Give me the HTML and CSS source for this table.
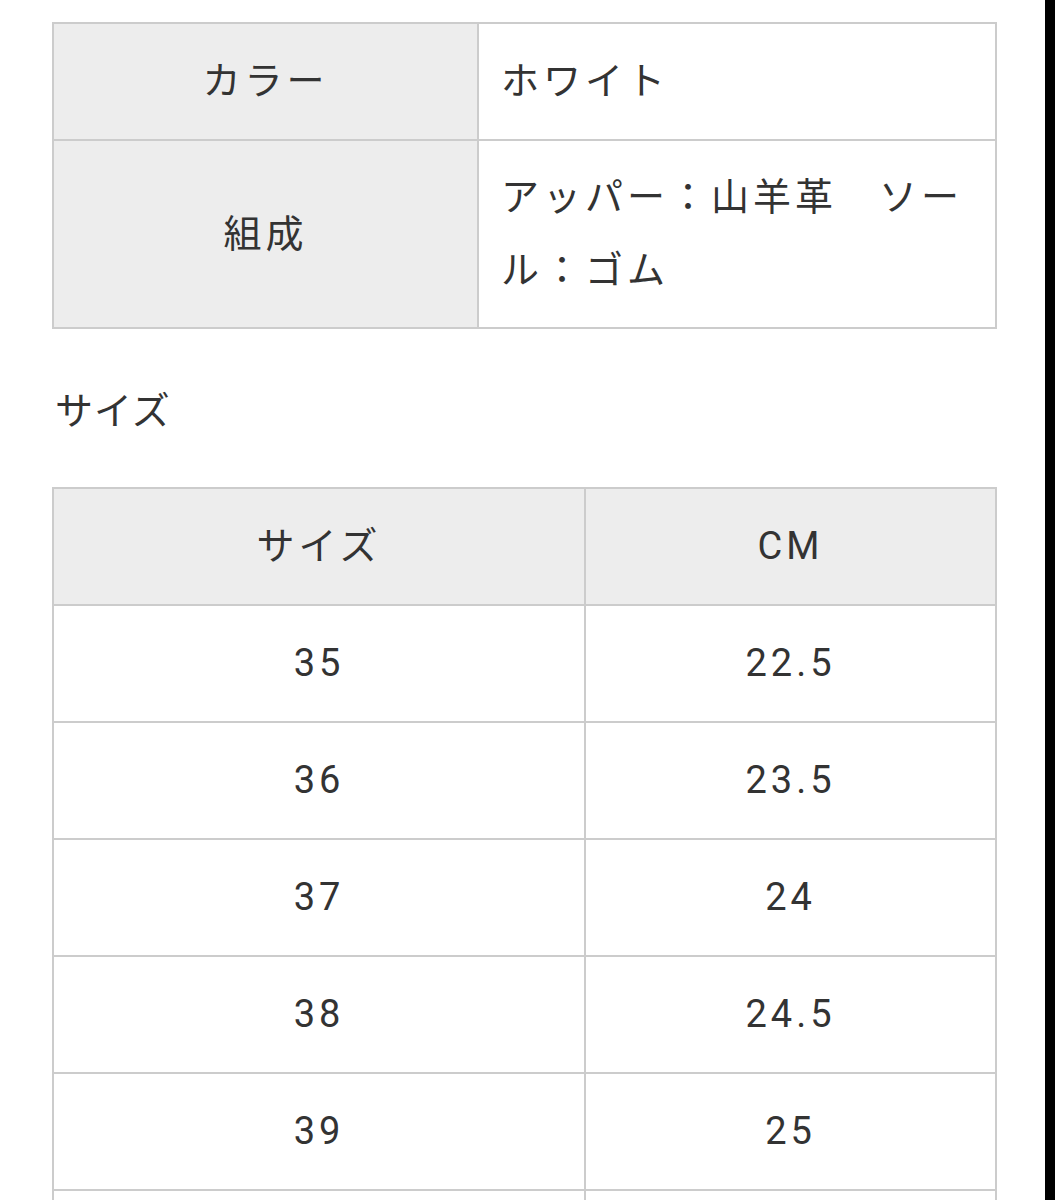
FILE: index.html
```html
<!DOCTYPE html>
<html lang="ja">
<head>
<meta charset="utf-8">
<title>商品情報</title>
<link rel="stylesheet" href="styles.css">
</head>
<body>
<div class="screen">
  <main class="content">
    <table class="spec">
      <colgroup><col class="spec-key"><col class="spec-val"></colgroup>
      <tr><th>カラー</th><td>ホワイト</td></tr>
      <tr><th>組成</th><td>アッパー：山羊革　ソール：ゴム</td></tr>
    </table>
    <h2 class="section-title">サイズ</h2>
    <table class="sizes">
      <colgroup><col class="size-a"><col class="size-b"></colgroup>
      <tr><th>サイズ</th><th>CM</th></tr>
      <tr><td>35</td><td>22.5</td></tr>
      <tr><td>36</td><td>23.5</td></tr>
      <tr><td>37</td><td>24</td></tr>
      <tr><td>38</td><td>24.5</td></tr>
      <tr><td>39</td><td>25</td></tr>
      <tr class="row-cut"><td></td><td></td></tr>
    </table>
  </main>
  <div class="edge"></div>
</div>
</body>
</html>
```
FILE: styles.css
```css
html, body {
  margin: 0;
  padding: 0;
  background: #ffffff;
}
body {
  font-family: Roboto, "Noto Sans CJK JP", sans-serif;
  color: #333333;
  font-size: 38px;
  letter-spacing: 4px;
}
.screen {
  display: flex;
  height: 1200px;
  overflow: hidden;
}
.content {
  flex: 1;
  padding: 22px 48px 0 52px;
}
.edge {
  width: 10px;
  background: #000000;
}
table {
  width: 945px;
  table-layout: fixed;
  border-collapse: separate;
  border-spacing: 0;
  border-top: 2px solid #cccccc;
  border-left: 2px solid #cccccc;
}
th, td {
  border-right: 2px solid #cccccc;
  border-bottom: 2px solid #cccccc;
  padding: 21px 22px;
  line-height: 73px;
  font-weight: 400;
  vertical-align: middle;
}
th {
  background: #ededed;
}
.spec-key { width: 425px; }
.spec-val { width: 518px; }
.spec th { text-align: center; }
.spec td { text-align: left; }
.spec tr:nth-child(2) th,
.spec tr:nth-child(2) td {
  padding-top: 20px;
  padding-bottom: 20px;
}
.section-title {
  margin: 46px 0 39px 3px;
  font-size: 38px;
  font-weight: 400;
  line-height: 73px;
  letter-spacing: 1px;
}
.size-a { width: 532px; }
.size-b { width: 411px; }
.sizes th, .sizes td { text-align: center; }
.row-cut td { height: 73px; }
```
